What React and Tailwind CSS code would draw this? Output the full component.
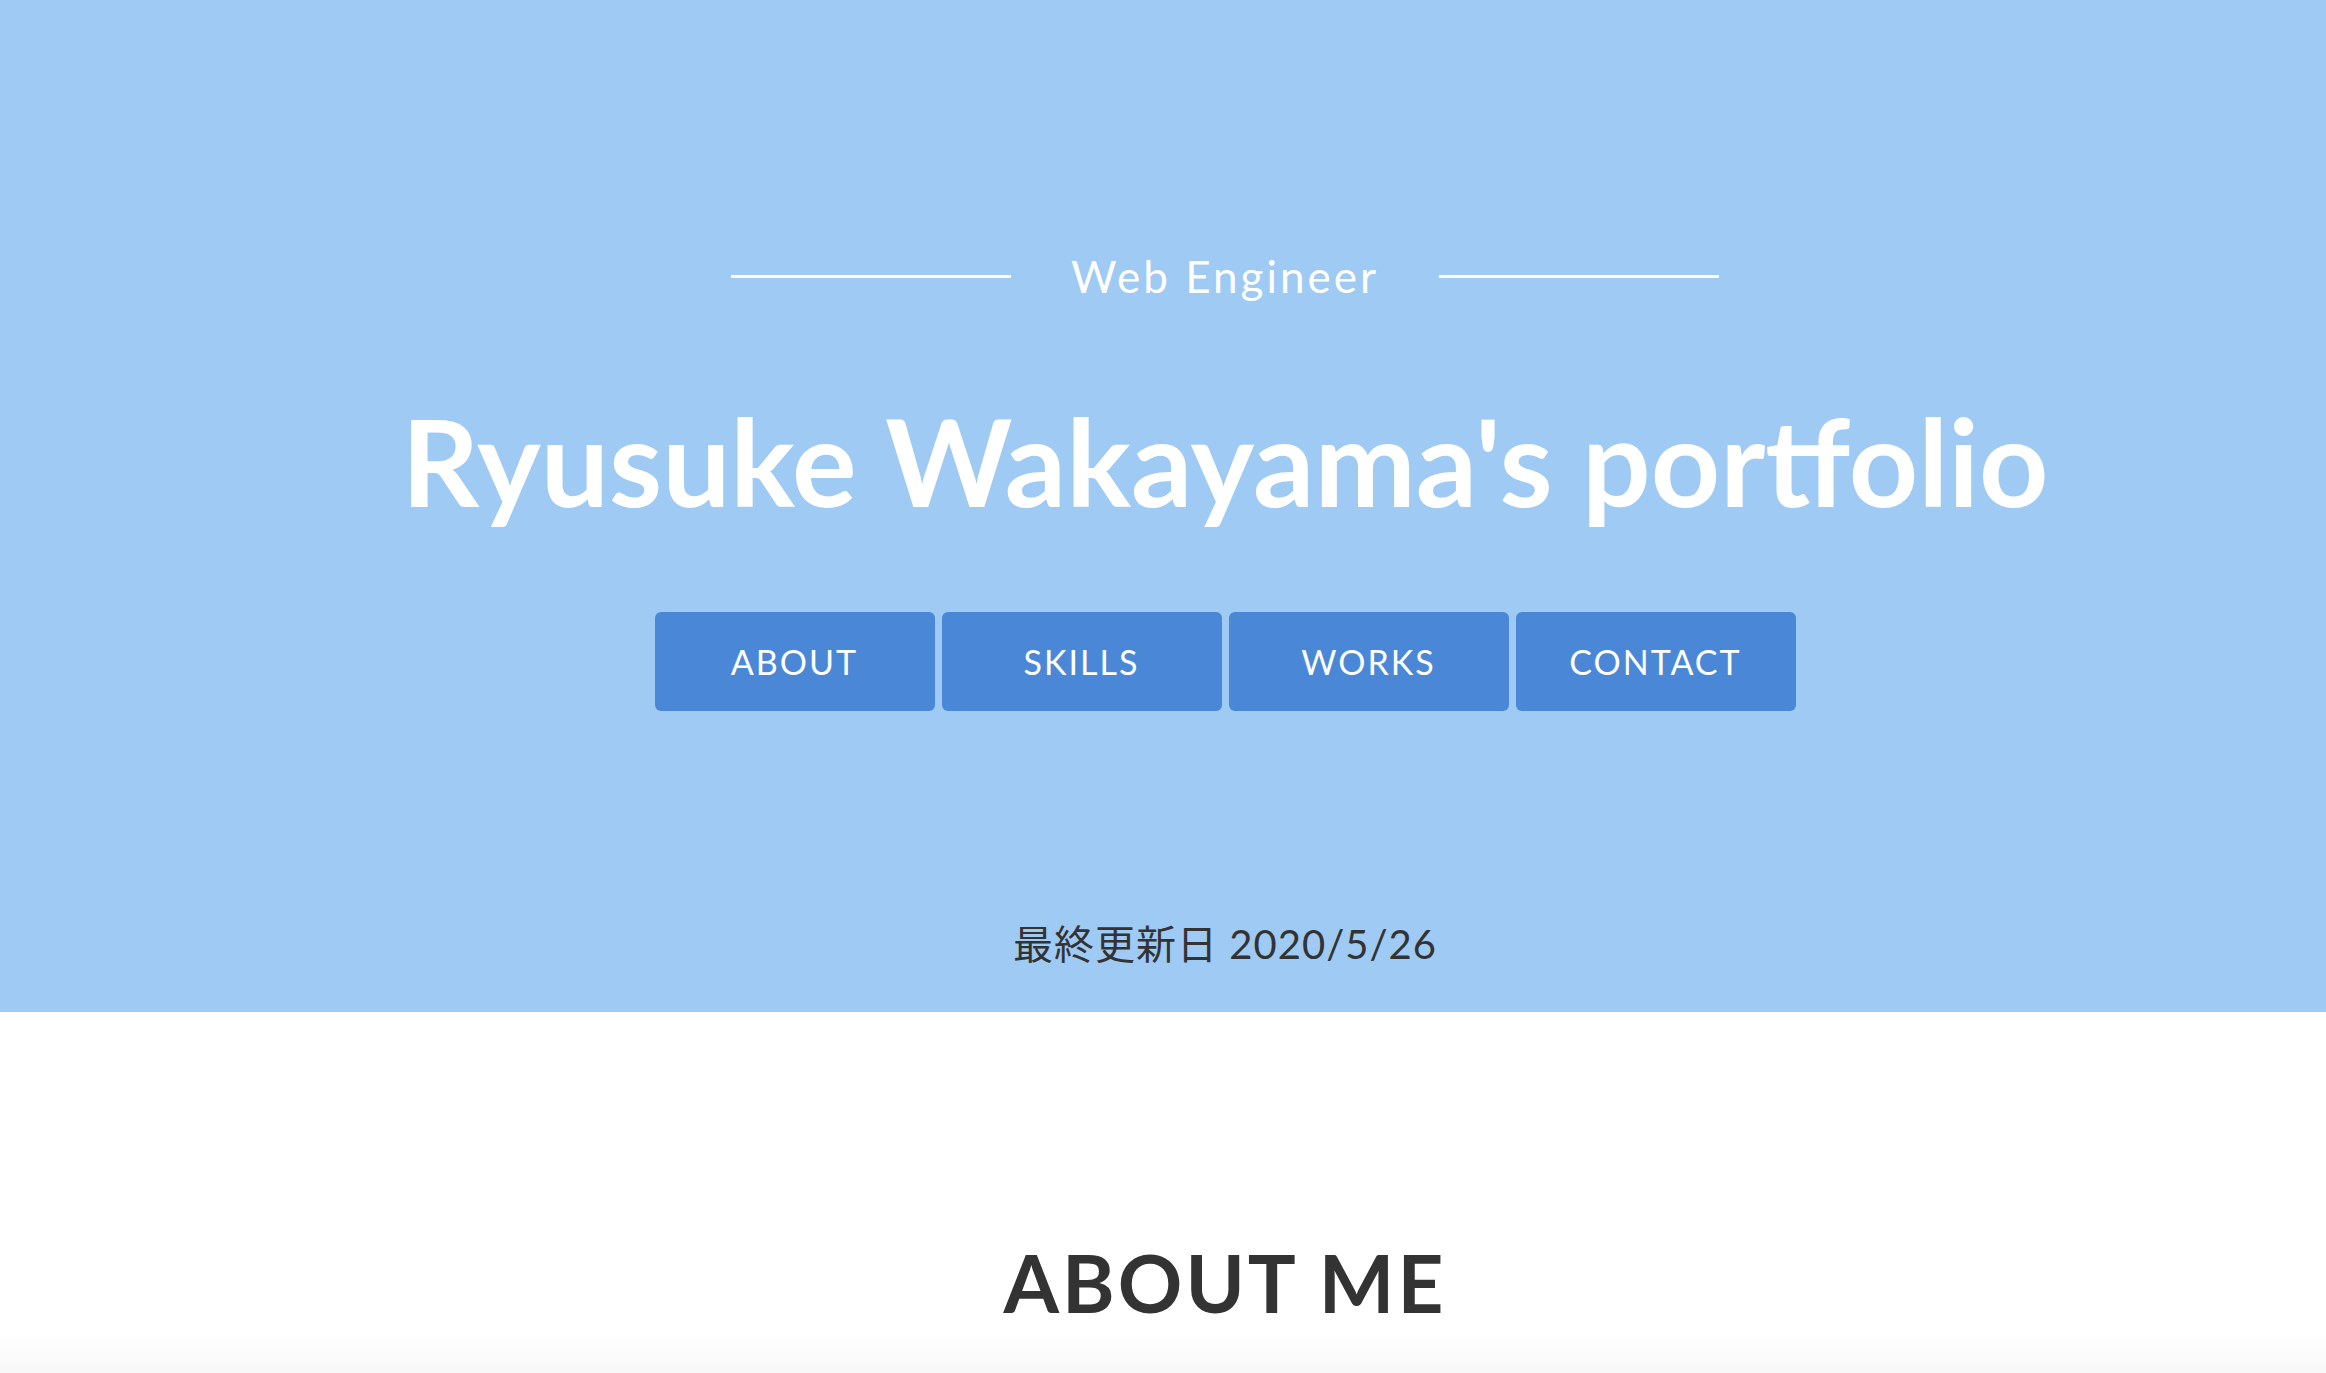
export default function App() {
  const font = { fontFamily: 'Lato, "Noto Sans CJK JP", sans-serif' };
  return (
    <div className="w-full bg-white" style={font}>
      <header className="bg-[#9ecaf3] h-[1012px] pl-[124px] flex flex-col items-center">
        <div className="mt-[246px] h-[60px] flex items-center gap-[60px]">
          <div className="w-[280px] h-[3px] bg-white" />
          <div className="text-white text-[44px] leading-none font-normal tracking-[3px]">Web Engineer</div>
          <div className="w-[280px] h-[3px] bg-white" />
        </div>
        <h1 className="mt-[90px] text-white text-[121px] leading-[130px] font-bold">Ryusuke Wakayama's portfolio</h1>
        <nav className="mt-[86px] flex gap-[7px]">
          {["ABOUT", "SKILLS", "WORKS", "CONTACT"].map((t) => (
            <a key={t} className="w-[280px] h-[99px] rounded-[6px] bg-[#4a88d7] text-white text-[34px] tracking-[2px] flex items-center justify-center">
              {t}
            </a>
          ))}
        </nav>
        <div className="mt-[213px] text-[#333333] text-[40px] leading-none tracking-[1px]">最終更新日 2020/5/26</div>
      </header>
      <section className="pt-[230px] pl-[124px] flex flex-col items-center bg-gradient-to-b from-white from-[320px] to-[#f8f8f8] to-[361px] h-[361px]">
        <h2 className="text-[#333333] text-[80px] leading-none font-bold tracking-[3px]">ABOUT ME</h2>
      </section>
    </div>
  );
}
